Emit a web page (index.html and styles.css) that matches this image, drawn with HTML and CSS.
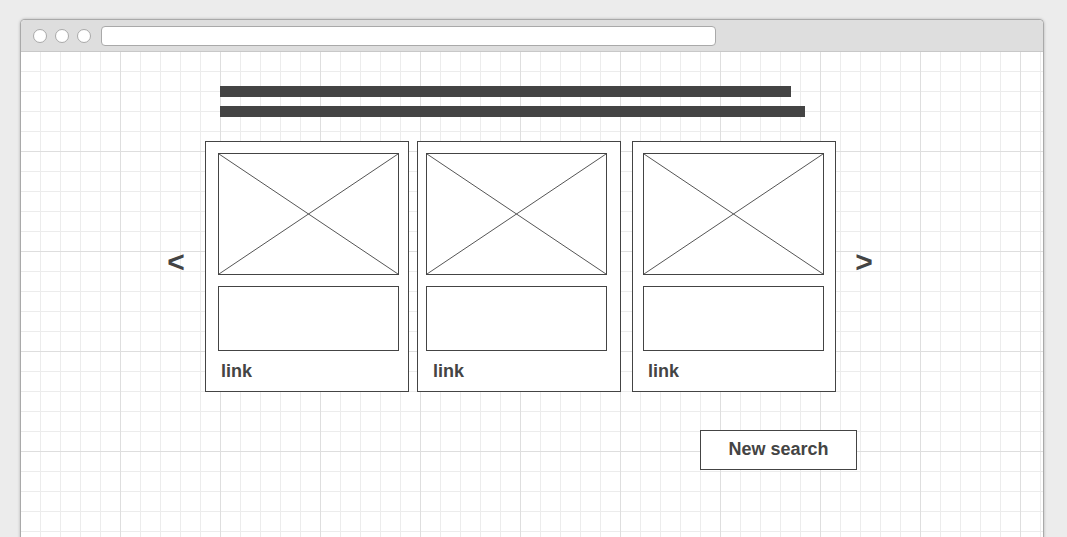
FILE: index.html
```html
<!DOCTYPE html>
<html lang="en">
<head>
    <meta charset="UTF-8">
    <title>Search results wireframe</title>
    <link rel="stylesheet" href="styles.css">
</head>
<body>
    <div class="window">
        <div class="toolbar">
            <span class="dot"></span>
            <span class="dot"></span>
            <span class="dot"></span>
            <div class="address"></div>
        </div>

        <div class="content">
            <div class="heading">
                <div class="bar bar-short"></div>
                <div class="bar bar-long"></div>
            </div>

            <div class="carousel">
                <div class="arrow arrow-prev">&lt;</div>

                <div class="card card-1">
                    <div class="image">
                        <svg viewBox="0 0 100 100" preserveAspectRatio="none">
                            <line x1="0" y1="0" x2="100" y2="100" vector-effect="non-scaling-stroke"></line>
                            <line x1="100" y1="0" x2="0" y2="100" vector-effect="non-scaling-stroke"></line>
                        </svg>
                    </div>
                    <div class="text-box"></div>
                    <div class="link">link</div>
                </div>

                <div class="card card-2">
                    <div class="image">
                        <svg viewBox="0 0 100 100" preserveAspectRatio="none">
                            <line x1="0" y1="0" x2="100" y2="100" vector-effect="non-scaling-stroke"></line>
                            <line x1="100" y1="0" x2="0" y2="100" vector-effect="non-scaling-stroke"></line>
                        </svg>
                    </div>
                    <div class="text-box"></div>
                    <div class="link">link</div>
                </div>

                <div class="card card-3">
                    <div class="image">
                        <svg viewBox="0 0 100 100" preserveAspectRatio="none">
                            <line x1="0" y1="0" x2="100" y2="100" vector-effect="non-scaling-stroke"></line>
                            <line x1="100" y1="0" x2="0" y2="100" vector-effect="non-scaling-stroke"></line>
                        </svg>
                    </div>
                    <div class="text-box"></div>
                    <div class="link">link</div>
                </div>

                <div class="arrow arrow-next">&gt;</div>
            </div>

            <div class="actions">
                <button type="button" class="search-button">New search</button>
            </div>
        </div>
    </div>
</body>
</html>
```

FILE: styles.css
```css
:root {
    --ink: #444;
    --line: #555;
    --grid-minor: #ececec;
    --grid-major: #dedede;
}

* {
    margin: 0;
    padding: 0;
    box-sizing: border-box;
}

html, body {
    height: 100%;
    overflow: hidden;
}

body {
    background: #ececec;
    font-family: 'Liberation Sans', Arial, sans-serif;
    color: var(--ink);
}

.window {
    margin: 19px 0 0 20px;
    width: 1024px;
    height: 540px;
    border: 1px solid #a9a9a9;
    border-bottom: none;
    border-radius: 5px 5px 0 0;
    background: white;
    box-shadow: 0 0 3px rgba(0, 0, 0, 0.25);
    display: flex;
    flex-direction: column;
}

/* browser chrome */
.toolbar {
    height: 32px;
    background: #dedede;
    border-bottom: 1px solid #c8c8c8;
    border-radius: 4px 4px 0 0;
    display: flex;
    align-items: center;
    padding-left: 12px;
    gap: 8px;
}

.dot {
    width: 14px;
    height: 14px;
    border-radius: 50%;
    background: white;
    border: 1px solid #a9a9a9;
}

.address {
    width: 615px;
    height: 20px;
    margin-left: 2px;
    background: white;
    border: 1px solid #a9a9a9;
    border-radius: 4px;
}

/* canvas with grid */
.content {
    flex: 1;
    padding: 34px 0 0 199px;
    background-color: white;
    background-image:
        linear-gradient(90deg, transparent 99px, var(--grid-major) 99px),
        linear-gradient(180deg, transparent 99px, var(--grid-major) 99px),
        linear-gradient(90deg, transparent 19px, var(--grid-minor) 19px),
        linear-gradient(180deg, transparent 19px, var(--grid-minor) 19px);
    background-size: 100px 100px, 100px 100px, 20px 20px, 20px 20px;
}

.heading {
    display: flex;
    flex-direction: column;
    gap: 9px;
}

.bar {
    height: 11px;
    background: var(--ink);
}

.bar-short {
    width: 571px;
}

.bar-long {
    width: 585px;
}

/* carousel */
.carousel {
    display: flex;
    align-items: flex-start;
    margin: 24px 0 0 -56px;
}

.arrow {
    width: 24px;
    margin-top: 106px;
    font-size: 30px;
    font-weight: 700;
    line-height: 30px;
    text-align: center;
}

.arrow-prev {
    margin-right: 17px;
}

.arrow-next {
    margin-left: 16px;
}

.card {
    width: 204px;
    height: 251px;
    border: 1px solid var(--ink);
    background: white;
    padding-top: 11px;
}

.card-2 {
    margin-left: 8px;
}

.card-3 {
    margin-left: 11px;
}

.image,
.text-box {
    width: 181px;
    border: 1px solid var(--ink);
    background: white;
}

.image {
    height: 122px;
}

.image svg {
    display: block;
    width: 100%;
    height: 100%;
}

.image line {
    stroke: var(--line);
    stroke-width: 1;
}

.text-box {
    height: 65px;
    margin-top: 11px;
}

.card-1 .image,
.card-1 .text-box {
    margin-left: 12px;
}

.card-2 .image,
.card-2 .text-box {
    margin-left: 8px;
}

.card-3 .image,
.card-3 .text-box {
    margin-left: 10px;
}

.link {
    margin-top: 10px;
    padding-left: 15px;
    font-size: 18px;
    font-weight: 700;
    line-height: 20px;
}

/* actions */
.actions {
    margin: 38px 0 0 480px;
}

.search-button {
    width: 157px;
    height: 40px;
    padding-bottom: 1px;
    border: 1px solid var(--ink);
    background: white;
    color: var(--ink);
    font-family: inherit;
    font-size: 18px;
    font-weight: 700;
}
```
